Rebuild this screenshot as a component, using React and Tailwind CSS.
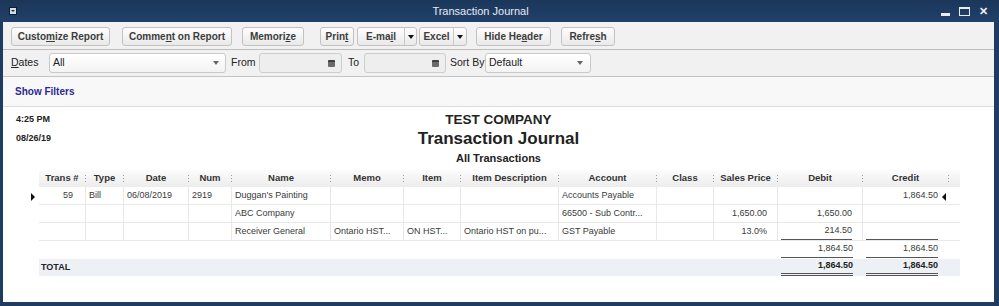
import React from "react";

const F = "font-['Liberation_Sans',Arial,sans-serif]";

function U({ children }) {
  return <span className="underline underline-offset-[1px]">{children}</span>;
}

function Btn({ w, children }) {
  return (
    <div
      className={`${w} h-[19px] border border-[#c2c2c2] rounded-[3px] bg-linear-to-b from-[#fefefe] to-[#e9e9e9] text-[10px] font-bold text-[#3d3d3d] flex items-center justify-center leading-none`}
    >
      {children}
    </div>
  );
}

function Tri({ c = "border-t-[#333]" }) {
  return <div className={`w-0 h-0 border-l-[3px] border-r-[3px] border-t-[4px] border-l-transparent border-r-transparent ${c}`} />;
}

function Split({ w, lw, children }) {
  return (
    <div className={`${w} h-[19px] border border-[#c2c2c2] rounded-[3px] bg-linear-to-b from-[#fefefe] to-[#e9e9e9] text-[10px] font-bold text-[#3d3d3d] flex items-stretch leading-none`}>
      <div className={`${lw} flex items-center justify-center`}>{children}</div>
      <div className="flex-1 border-l border-[#c8c8c8] flex items-center justify-center">
        <Tri c="border-t-[#111]" />
      </div>
    </div>
  );
}

function Cal() {
  return (
    <div className="w-[7px] h-[7px] bg-[#6a6a6a] border-t-2 border-[#3d3d3d] rounded-[1px]" />
  );
}

function Dots() {
  return (
    <div className="flex flex-col gap-[2px] w-[1px]">
      <div className="w-[1px] h-[1px] bg-[#9a9a9a]" />
      <div className="w-[1px] h-[1px] bg-[#9a9a9a]" />
      <div className="w-[1px] h-[1px] bg-[#9a9a9a]" />
    </div>
  );
}

const cols = [
  { w: "w-[47px]", label: "Trans #" },
  { w: "w-[38px]", label: "Type" },
  { w: "w-[65px]", label: "Date" },
  { w: "w-[43px]", label: "Num" },
  { w: "w-[99px]", label: "Name" },
  { w: "w-[73px]", label: "Memo" },
  { w: "w-[57px]", label: "Item" },
  { w: "w-[98px]", label: "Item Description" },
  { w: "w-[98px]", label: "Account" },
  { w: "w-[57px]", label: "Class" },
  { w: "w-[64px]", label: "Sales Price" },
  { w: "w-[85px]", label: "Debit" },
  { w: "w-[86px]", label: "Credit" },
];

const rows = [
  ["59", "Bill", "06/08/2019", "2919", "Duggan's Painting", "", "", "", "Accounts Payable", "", "", "", "1,864.50"],
  ["", "", "", "", "ABC Company", "", "", "", "66500 - Sub Contr...", "", "1,650.00", "1,650.00", ""],
  ["", "", "", "", "Receiver General", "Ontario HST...", "ON HST...", "Ontario HST on pu...", "GST Payable", "", "13.0%", "214.50", ""],
];

function DataRow({ r, idx }) {
  return (
    <div className="relative flex h-[18px] border-b border-[#e8e8e8] w-[921px] text-[9px] text-[#3a3a3a]">
      {idx === 0 && (
        <div className="absolute left-[-8px] top-[6px] w-0 h-0 border-t-[4px] border-b-[4px] border-l-[4px] border-t-transparent border-b-transparent border-l-[#111]" />
      )}
      {cols.map((c, i) => {
        const border = i < 12 ? "border-r border-[#e8e8e8]" : "";
        if (i === 0) {
          return (
            <div key={i} className={`${c.w} ${border} flex items-center justify-end pr-[12px]`}>
              {r[i]}
            </div>
          );
        }
        if (i >= 10) {
          const ul = idx === 2 && i >= 11;
          return (
            <div key={i} className={`${c.w} ${border} relative flex items-stretch pl-[3px] ${i === 12 ? "pr-[11px]" : "pr-[10px]"}`}>
              <div className={`flex-1 flex items-center justify-end ${ul ? "border-b border-[#555]" : ""}`}>{r[i]}</div>
              {idx === 0 && i === 12 && (
                <div className="absolute right-[3px] top-[6px] w-0 h-0 border-t-[4px] border-b-[4px] border-r-[4px] border-t-transparent border-b-transparent border-r-[#111]" />
              )}
            </div>
          );
        }
        return (
          <div key={i} className={`${c.w} ${border} flex items-center pl-[3px] whitespace-nowrap overflow-hidden`}>
            {r[i]}
          </div>
        );
      })}
    </div>
  );
}

export default function App() {
  return (
    <div className={`${F} w-[999px] h-[306px] bg-[#1e3c60] flex flex-col overflow-hidden`}>
      {/* Title bar */}
      <div className="h-[22px] flex items-center bg-linear-to-b from-[#1b365a] to-[#21416a]">
        <div className="w-[22px] pl-[9px] flex items-center">
          <div className="w-[8px] h-[8px] bg-[#d6dde6] border border-[#0e1e33] flex items-center justify-center">
            <div className="w-0 h-0 border-l-[2px] border-r-[2px] border-t-[2px] border-l-transparent border-r-transparent border-t-[#1b2b44]" />
          </div>
        </div>
        <div className="flex-1 text-center text-[11px] text-[#e6ebf2] leading-none">Transaction Journal</div>
        <div className="w-[60px] flex items-center pl-[2px] gap-[9px]">
          <div className="w-[9px] h-[3px] bg-[#e8edf3] mt-[7px]" />
          <div className="w-[11px] h-[9px] border border-[#e8edf3] border-t-[2px]" />
          <div className="text-[11px] font-bold text-[#e8edf3] leading-none">✕</div>
        </div>
      </div>

      {/* Body */}
      <div className="flex-1 ml-[3px] mr-[5px] mb-[4px] flex flex-col bg-white">
        {/* Toolbar */}
        <div className="h-[28px] pt-[5px] pl-[8px] bg-[#f1f1f1] border-b border-[#bdbdbd] flex items-start">
          <Btn w="w-[99px]">Custo<U>m</U>ize Report</Btn>
          <div className="ml-[12px]"><Btn w="w-[110px]">Comme<U>n</U>t on Report</Btn></div>
          <div className="ml-[10px]"><Btn w="w-[62px]">Memori<U>z</U>e</Btn></div>
          <div className="ml-[16px]"><Btn w="w-[34px]">Prin<U>t</U></Btn></div>
          <div className="ml-[3px]"><Split w="w-[60px]" lw="w-[46px]">E-ma<U>i</U>l</Split></div>
          <div className="ml-[2px]"><Split w="w-[48px]" lw="w-[33px]">Excel</Split></div>
          <div className="ml-[9px]"><Btn w="w-[75px]">Hide He<U>a</U>der</Btn></div>
          <div className="ml-[10px]"><Btn w="w-[54px]">Refre<U>s</U>h</Btn></div>
        </div>

        {/* Filter row */}
        <div className="h-[27px] pl-[8px] bg-[#f1f1f1] border-b border-[#c4c4c4] flex items-center text-[10.5px] text-[#222]">
          <span className="w-[38px]"><U>D</U>ates</span>
          <div className="w-[177px] h-[20px] border border-[#c9c9c9] rounded-[3px] bg-linear-to-b from-white to-[#f3f3f3] flex items-center pl-[3px] pr-[6px]">
            <span className="flex-1">All</span>
            <Tri c="border-t-[#666]" />
          </div>
          <span className="ml-[5px] w-[28px]">From</span>
          <div className="w-[83px] h-[20px] border border-[#cdcdcd] rounded-[3px] bg-[#eeeeee] flex items-center justify-end pr-[6px]">
            <Cal />
          </div>
          <span className="ml-[6px] w-[16px]">To</span>
          <div className="w-[82px] h-[20px] border border-[#cdcdcd] rounded-[3px] bg-[#eeeeee] flex items-center justify-end pr-[6px]">
            <Cal />
          </div>
          <span className="ml-[4px] w-[35px]">Sort By</span>
          <div className="w-[106px] h-[20px] border border-[#c9c9c9] rounded-[3px] bg-linear-to-b from-white to-[#f3f3f3] flex items-center pl-[3px] pr-[7px]">
            <span className="flex-1">Default</span>
            <Tri c="border-t-[#666]" />
          </div>
        </div>

        {/* Show filters */}
        <div className="h-[30px] pl-[12px] bg-[#f8f8f8] border-b border-[#dcdcdc] flex items-center">
          <span className="text-[10px] font-bold text-[#2a2a92]">Show Filters</span>
        </div>

        {/* Report */}
        <div className="flex-1 bg-white flex flex-col">
          <div className="h-[63px] grid grid-cols-[1fr_auto_1fr]">
            <div className="pl-[13px] pt-[6px] text-[9px] font-bold text-[#222] leading-[12px]">
              <div>4:25 PM</div>
              <div className="mt-[7px]">08/26/19</div>
            </div>
            <div className="pt-[5px] flex flex-col items-center text-[#222] font-bold">
              <div className="text-[13.5px] leading-[16px]">TEST COMPANY</div>
              <div className="text-[17px] leading-[22px]">Transaction Journal</div>
              <div className="text-[11px] leading-[14px] mt-[1px]">All Transactions</div>
            </div>
            <div />
          </div>

          <div className="ml-[36px] flex flex-col">
            {/* header */}
            <div className="flex h-[17px] w-[921px] bg-linear-to-b from-[#fcfcfc] to-[#ececec] text-[9.5px] font-bold text-[#333]">
              {cols.map((c, i) => (
                <div key={i} className={`${c.w} flex items-center`}>
                  <span className="flex-1 text-center whitespace-nowrap">{c.label}</span>
                  <Dots />
                </div>
              ))}
              <div className="flex-1" />
            </div>

            {rows.map((r, i) => (
              <DataRow key={i} r={r} idx={i} />
            ))}

            {/* subtotal */}
            <div className="flex h-[17px] w-[921px] text-[9px] text-[#3a3a3a]">
              <div className="w-[739px]" />
              <div className="w-[85px] pl-[3px] pr-[10px] flex">
                <div className="flex-1 flex items-center justify-end border-b border-[#555]">1,864.50</div>
              </div>
              <div className="w-[86px] pl-[3px] pr-[11px] flex">
                <div className="flex-1 flex items-center justify-end border-b border-[#555]">1,864.50</div>
              </div>
            </div>

            {/* total */}
            <div className="flex h-[17px] w-[921px] bg-[#edf1f5] text-[9px] font-bold text-[#222] mt-[1px]">
              <div className="w-[739px] pl-[2px] flex items-center">TOTAL</div>
              <div className="w-[85px] pl-[3px] pr-[10px] flex">
                <div className="flex-1 flex items-center justify-end border-b-[3px] border-double border-[#555]">1,864.50</div>
              </div>
              <div className="w-[86px] pl-[3px] pr-[11px] flex">
                <div className="flex-1 flex items-center justify-end border-b-[3px] border-double border-[#555]">1,864.50</div>
              </div>
            </div>
          </div>
        </div>
      </div>
    </div>
  );
}
